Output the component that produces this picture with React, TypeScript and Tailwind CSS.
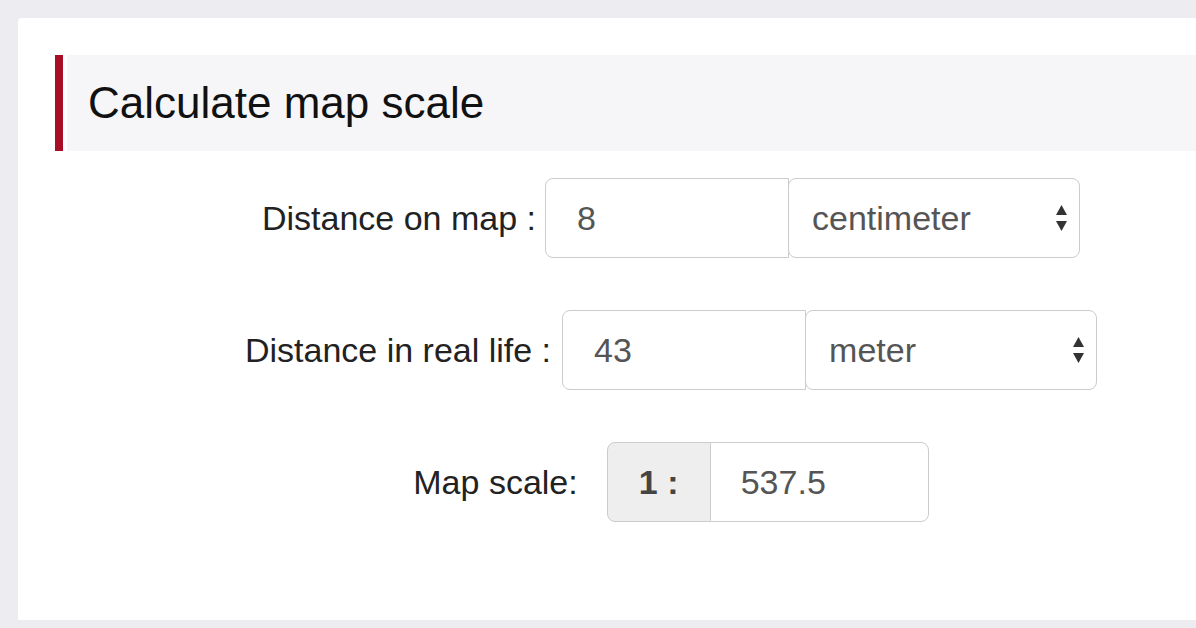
const font = { fontFamily: '"Liberation Sans", Arial, Helvetica, sans-serif' };

function Arrows() {
  return (
    <svg width="13" height="28" viewBox="0 0 13 28" className="shrink-0">
      <path d="M6.5 1 L12 11 L1 11 Z" fill="#333" />
      <path d="M1 17 L12 17 L6.5 27 Z" fill="#333" />
    </svg>
  );
}

function UnitRow({
  label,
  value,
  unit,
  gap
}: {
  label: string;
  value: string;
  unit: string;
  gap: string;
}) {
  return (
    <div className={`flex items-center ${gap}`}>
      <label className="text-[34px] text-[#222] whitespace-nowrap">{label}</label>
      <div className="flex">
        <div className="flex h-[80px] w-[244px] items-center rounded-l-lg border border-[#ccc] bg-white pl-[31px] text-[34px] text-[#555]">
          {value}
        </div>
        <div className="-ml-px flex h-[80px] w-[292px] items-center justify-between rounded-lg border border-[#ccc] bg-white pl-[23px] pr-[11px] text-[34px] text-[#555]">
          <span>{unit}</span>
          <Arrows />
        </div>
      </div>
    </div>
  );
}

export default function App() {
  return (
    <div className="h-[628px] w-[1196px] overflow-hidden bg-[#ececf1] pt-[18px] pl-[18px]" style={font}>
      <div className="h-[602px] w-full rounded-tl-sm bg-white pt-[37px]">
        <div className="ml-[37px] flex h-[96px]">
          <div className="w-[8px] bg-[#a80f26]" />
          <div className="ml-[4px] flex flex-1 items-center bg-[#f6f6f9] pl-[21px]">
            <h1 className="text-[44px] leading-none text-[#111]">Calculate map scale</h1>
          </div>
        </div>

        <div className="mt-[27px] flex flex-col items-center gap-[52px] pl-[128px]">
          <UnitRow label="Distance on map :" value="8" unit="centimeter" gap="gap-[9px]" />
          <UnitRow label="Distance in real life :" value="43" unit="meter" gap="gap-[11px]" />
          <div className="flex items-center gap-[29px]">
            <label className="text-[34px] text-[#222]">Map scale:</label>
            <div className="flex">
              <div className="flex h-[80px] w-[104px] items-center justify-center rounded-l-lg border border-[#ccc] bg-[#eee] text-[34px] font-semibold text-[#444]">
                1 :
              </div>
              <div className="-ml-px flex h-[80px] w-[219px] items-center rounded-r-lg border border-[#ccc] bg-white pl-[30px] text-[34px] text-[#555]">
                537.5
              </div>
            </div>
          </div>
        </div>
      </div>
    </div>
  );
}
